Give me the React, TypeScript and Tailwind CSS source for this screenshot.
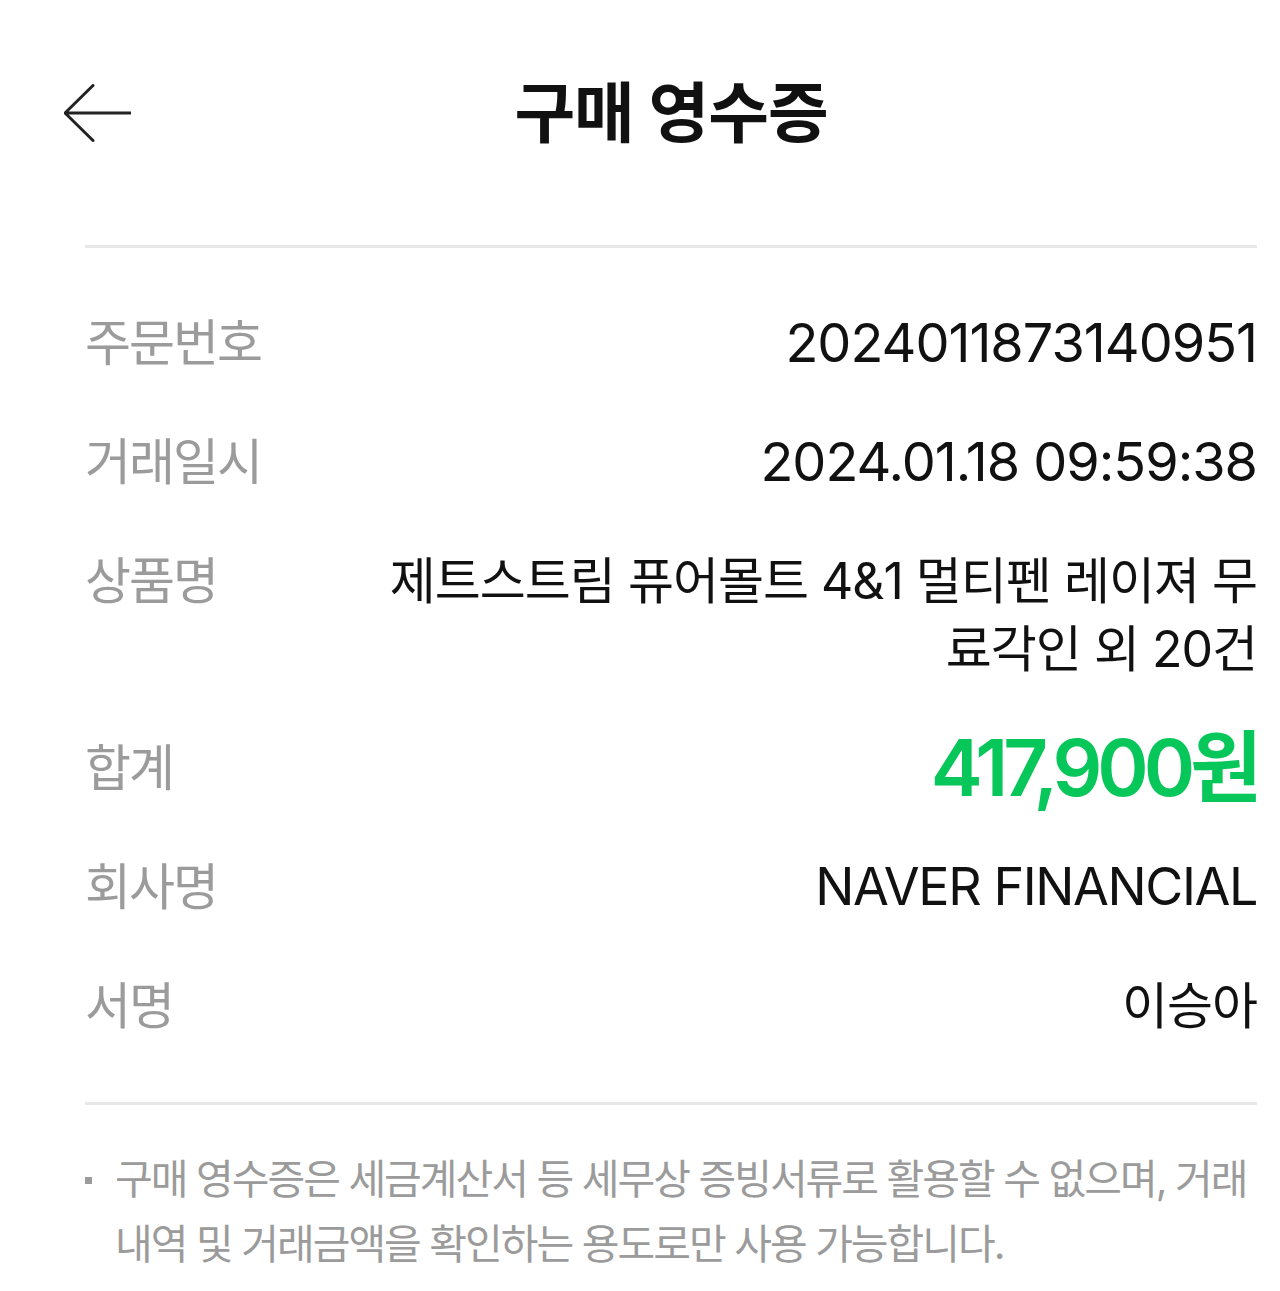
const rows = [
  { label: "주문번호", value: "2024011873140951", kind: "num" },
  { label: "거래일시", value: "2024.01.18 09:59:38", kind: "num" },
  { label: "상품명", value: "제트스트림 퓨어몰트 4&1 멀티펜 레이져 무료각인 외 20건", kind: "text" },
  { label: "합계", value: "417,900원", kind: "total" },
  { label: "회사명", value: "NAVER FINANCIAL", kind: "latin" },
  { label: "서명", value: "이승아", kind: "text" },
];

const valueClass: Record<string, string> = {
  num: "text-[54px] tracking-[-1px] text-[#111]",
  text: "text-[50px] tracking-[-1px] text-[#111]",
  latin: "text-[52px] tracking-[-1.4px] text-[#111]",
  total: "text-[78px] font-semibold tracking-[-5px] text-[#07c65a]",
};

const App = () => {
  return (
    <div className="min-h-[1291px] w-[1280px] bg-white font-['Inter','Noto_Sans_CJK_KR',sans-serif]">
      <header className="grid h-[226px] grid-cols-[1fr_auto_1fr] items-center pl-[85px] pr-[23px]">
        <button className="-ml-[21px] flex h-[56px] w-[67px] items-center">
          <svg width="67" height="58" viewBox="0 0 67 58" fill="none" stroke="#222" strokeWidth="3" strokeLinecap="round" strokeLinejoin="round">
            <path d="M29 1.5 1 29l28 27.5M1 29h66" />
          </svg>
        </button>
        <h1 className="text-[66px] leading-none font-bold tracking-[-1px] text-[#111]">구매 영수증</h1>
        <div />
      </header>

      <div className="ml-[85px] mr-[23px] mt-[19px] border-t-[3px] border-[#e8e8e8]" />

      <section className="ml-[85px] mr-[23px] flex flex-col gap-[51px] pt-[61px] pb-[62px]">
        {rows.map((row) => (
          <div key={row.label} className="flex items-start justify-between leading-[68px]">
            <div className="shrink-0 text-[50px] tracking-[-2px] text-[#9b9b9b]">{row.label}</div>
            <div className={`w-[885px] text-right ${valueClass[row.kind]}`}>{row.value}</div>
          </div>
        ))}
      </section>

      <div className="ml-[85px] mr-[23px] border-t-[3px] border-[#e8e8e8]" />

      <div className="ml-[85px] mr-[23px] flex pt-[42px]">
        <span className="mt-[30px] mr-[23px] h-[7px] w-[7px] shrink-0 bg-[#9b9b9b]" />
        <p className="text-[41px] leading-[65px] tracking-[-2px] text-[#9b9b9b]">
          구매 영수증은 세금계산서 등 세무상 증빙서류로 활용할 수 없으며, 거래 내역 및 거래금액을 확인하는 용도로만 사용 가능합니다.
        </p>
      </div>
    </div>
  );
};

export default App;
